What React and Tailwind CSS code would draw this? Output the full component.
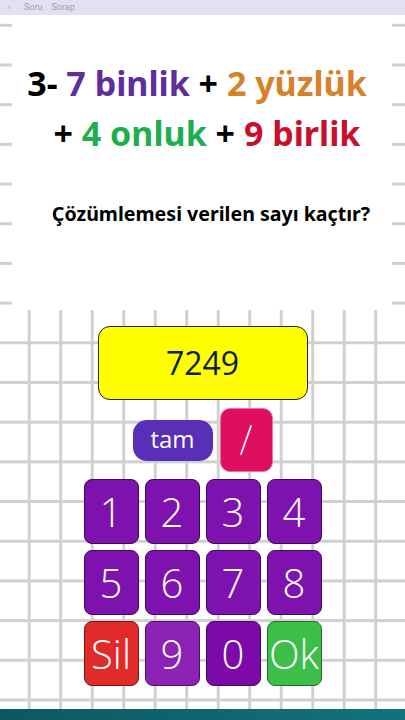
import React from "react";

const keyBase =
  "w-[55px] h-[65px] rounded-[8px] border flex items-center justify-center text-white text-[40px] font-light leading-none";

const rows = [
  [
    { label: "1", cls: "bg-[#7e12ae] border-[#3f0a5c]" },
    { label: "2", cls: "bg-[#7e12ae] border-[#3f0a5c]" },
    { label: "3", cls: "bg-[#7e12ae] border-[#3f0a5c]" },
    { label: "4", cls: "bg-[#7e12ae] border-[#3f0a5c]" },
  ],
  [
    { label: "5", cls: "bg-[#7e12ae] border-[#3f0a5c]" },
    { label: "6", cls: "bg-[#7e12ae] border-[#3f0a5c]" },
    { label: "7", cls: "bg-[#7e12ae] border-[#3f0a5c]" },
    { label: "8", cls: "bg-[#7e12ae] border-[#3f0a5c]" },
  ],
  [
    { label: "Sil", cls: "bg-[#e12a2a] border-[#7a1515]" },
    { label: "9", cls: "bg-[#8d23b5] border-[#4a0f66]" },
    { label: "0", cls: "bg-[#7b0aa8] border-[#3f0a5c]" },
    { label: "Ok", cls: "bg-[#3dbe49] border-[#1f6e2a]" },
  ],
];

export default function App() {
  return (
    <div className="w-[405px] h-[720px] overflow-hidden flex flex-col bg-white [background-image:linear-gradient(to_bottom,#d0d0d0_2.5px,transparent_2.5px)] [background-size:100%_39.7px] [background-position:0_23.8px]">
      {/* status bar */}
      <div className="h-[15px] shrink-0 bg-[#e4e0f0] px-[8px] flex items-center">
        <p className="text-[9px] leading-none text-[#77728a] whitespace-nowrap font-['Roboto',sans-serif] opacity-60">
          ‹&nbsp;&nbsp;&nbsp;&nbsp;&nbsp;&nbsp;Soru&nbsp;&nbsp;&nbsp;&nbsp;Sorap
        </p>
      </div>

      {/* question */}
      <div className="h-[295px] shrink-0 ml-[12px] mr-[13px] bg-white flex flex-col items-center font-['Noto_Sans',sans-serif] font-bold">
        <p className="mt-[43px] text-[34px] leading-[50px] whitespace-nowrap pr-[10px]">
          <span className="text-black">3- </span>
          <span className="text-[#5e2d9e]">7 binlik</span>
          <span className="text-black"> + </span>
          <span className="text-[#d9802a]">2 yüzlük</span>
        </p>
        <p className="text-[34px] leading-[50px] whitespace-nowrap pl-[10px]">
          <span className="text-black">+ </span>
          <span className="text-[#1fae4f]">4 onluk</span>
          <span className="text-black"> + </span>
          <span className="text-[#c8102e]">9 birlik</span>
        </p>
        <p className="mt-[43px] text-[19.6px] leading-[26px] text-black whitespace-nowrap pl-[18px]">
          Çözümlemesi verilen sayı kaçtır?
        </p>
      </div>

      {/* answer area on grid paper */}
      <div className="flex-1 flex flex-col items-center pt-[16px] font-['Open_Sans',sans-serif] [background-image:linear-gradient(to_right,#d0d0d0_2.5px,transparent_2.5px)] [background-size:31.5px_100%] [background-position:27.75px_0]">
        <div className="w-[210px] h-[74px] rounded-[12px] border-[1.5px] border-[#222] bg-[#ffff00] flex items-center justify-center text-[32px] text-[#0a1f3d]">
          7249
        </div>

        <div className="mt-[8px] flex items-center gap-[7px]">
          <div className="w-[80px] h-[41px] rounded-[14px] bg-[#5a2fb8] text-white text-[24px] flex items-center justify-center pb-[2px]">
            tam
          </div>
          <div className="w-[53px] h-[64px] rounded-[10px] bg-[#df0e5e] border border-[#f0709a] flex items-center justify-center">
            <svg width="20" height="40" viewBox="0 0 20 40">
              <line x1="15" y1="6" x2="5" y2="34" stroke="white" strokeWidth="1.8" strokeLinecap="round" />
            </svg>
          </div>
        </div>

        <div className="mt-[7px] flex flex-col gap-[6px]">
          {rows.map((row, i) => (
            <div key={i} className="flex gap-[6px]">
              {row.map((k) => (
                <div key={k.label} className={`${keyBase} ${k.cls}`}>
                  {k.label}
                </div>
              ))}
            </div>
          ))}
        </div>
      </div>

      <div className="h-[11px] shrink-0 bg-gradient-to-r from-[#0d5860] to-[#14727a]" />
    </div>
  );
}
